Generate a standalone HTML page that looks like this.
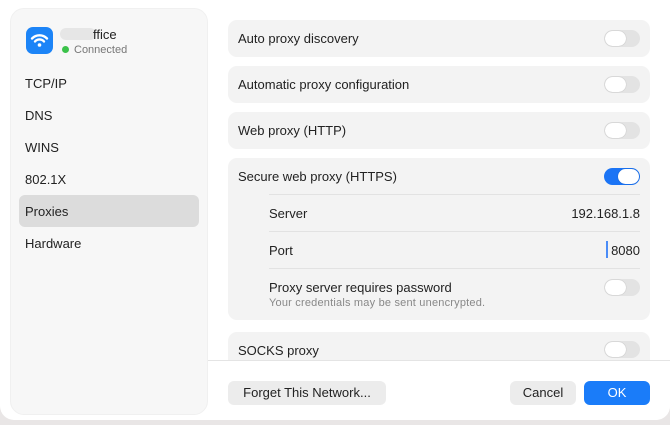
<!DOCTYPE html>
<html><head><style>
*{margin:0;padding:0;box-sizing:border-box}
body{width:670px;height:425px;background:#e9e6e6;font-family:"Liberation Sans",sans-serif;font-size:13px;color:#222;position:relative;overflow:hidden}
.win{position:absolute;left:0;top:0;width:670px;height:420px;background:#fff;border-radius:0 0 14px 14px}
.side{position:absolute;left:10px;top:8px;width:198px;height:407px;background:#f7f7f7;border-radius:14px;border:1px solid #f0f0f0}
.si{position:absolute;left:14px;font-size:13px;color:#222}
.sel{position:absolute;left:8px;top:186px;width:180px;height:32px;background:#dcdcdc;border-radius:6px}
.row{position:absolute;left:228px;width:422px;background:#f3f3f3;border-radius:9px}
.t{position:absolute;left:10px;font-size:13px}
.tg{position:absolute;right:10px;width:36px;height:17px;border-radius:9px;background:#e3e3e3}
.tg::after{content:"";position:absolute;left:1px;top:1px;width:21px;height:15px;border-radius:8px;background:#fff;box-shadow:0 0 1px rgba(0,0,0,.3)}
.tg.on{background:#1b74f5}.tg.on::after{left:14px}
.sep{position:absolute;left:41px;right:10px;height:1px;background:#e2e2e2}
.btn{position:absolute;top:381px;height:24px;border-radius:6px;background:#ececec;font-size:13px;text-align:center;line-height:24px}
</style></head><body>
<div class="win">
<div class="side">
 <div style="position:absolute;left:15px;top:18px;width:27px;height:27px;border-radius:7px;background:#1c84f7">
  <svg width="27" height="27" viewBox="0 0 27 27"><g fill="none" stroke="#fff" stroke-width="2.4" stroke-linecap="round"><path d="M6 11.5a10.5 10.5 0 0 1 15 0"/><path d="M9 14.5a6 6 0 0 1 9 0"/></g><circle cx="13.5" cy="18" r="1.8" fill="#fff"/></svg>
 </div>
 <div style="position:absolute;left:49px;top:19px;width:36px;height:12px;background:#e6e6e6;border-radius:6px"></div>
 <div style="position:absolute;left:82px;top:18px;font-size:13px">ffice</div>
 <div style="position:absolute;left:51px;top:37px;width:7px;height:7px;border-radius:50%;background:#3bc24a"></div>
 <div style="position:absolute;left:63px;top:35px;font-size:11px;color:#777">Connected</div>
 <div class="sel"></div>
 <div class="si" style="top:67px">TCP/IP</div>
 <div class="si" style="top:99px">DNS</div>
 <div class="si" style="top:131px">WINS</div>
 <div class="si" style="top:163px">802.1X</div>
 <div class="si" style="top:195px">Proxies</div>
 <div class="si" style="top:227px">Hardware</div>
</div>
<div class="row" style="top:20px;height:37px"><div class="t" style="top:11px">Auto proxy discovery</div><div class="tg" style="top:10px"></div></div>
<div class="row" style="top:66px;height:37px"><div class="t" style="top:11px">Automatic proxy configuration</div><div class="tg" style="top:10px"></div></div>
<div class="row" style="top:112px;height:37px"><div class="t" style="top:11px">Web proxy (HTTP)</div><div class="tg" style="top:10px"></div></div>
<div class="row" style="top:158px;height:162px">
 <div class="t" style="top:11px">Secure web proxy (HTTPS)</div><div class="tg on" style="top:10px"></div>
 <div class="sep" style="top:36px"></div>
 <div class="t" style="left:41px;top:48px">Server</div><div style="position:absolute;right:10px;top:48px">192.168.1.8</div>
 <div class="sep" style="top:73px"></div>
 <div class="t" style="left:41px;top:85px">Port</div><div style="position:absolute;right:10px;top:85px">8080</div>
 <div style="position:absolute;right:42px;top:83px;width:2px;height:17px;background:#4a8cf7"></div>
 <div class="sep" style="top:110px"></div>
 <div class="t" style="left:41px;top:122px">Proxy server requires password</div>
 <div class="t" style="left:41px;top:139px;font-size:11px;color:#888;letter-spacing:0.2px">Your credentials may be sent unencrypted.</div>
 <div class="tg" style="top:121px"></div>
</div>
<div class="row" style="top:332px;height:40px"><div class="t" style="top:11px">SOCKS proxy</div><div class="tg" style="top:9px"></div></div>
<div style="position:absolute;left:208px;top:360px;width:462px;height:60px;background:#fff;border-top:1px solid #e4e4e4;border-radius:0 0 14px 0"></div>
<div class="btn" style="left:228px;width:158px">Forget This Network...</div>
<div class="btn" style="left:510px;width:66px">Cancel</div>
<div class="btn" style="left:584px;width:66px;background:#1a7cf9;color:#fff">OK</div>
</div>
</body></html>
